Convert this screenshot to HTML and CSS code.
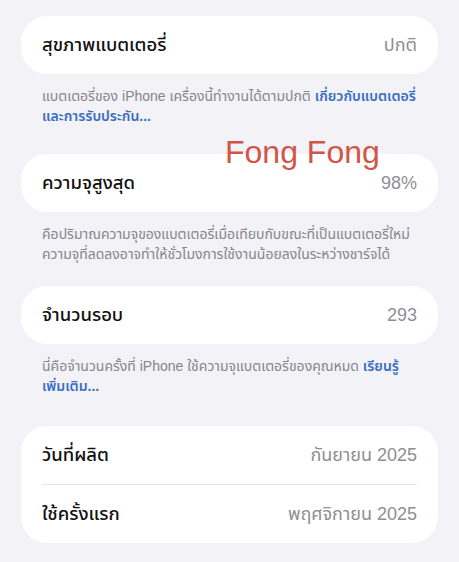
FILE: index.html
```html
<!DOCTYPE html>
<html lang="th">
<head>
<meta charset="utf-8">
<link rel="stylesheet" href="styles.css">
</head>
<body>
<main class="page">
  <section class="group g1">
    <div class="card">
      <div class="row"><span class="label">สุขภาพแบตเตอรี่</span><span class="value">ปกติ</span></div>
    </div>
    <p class="note">แบตเตอรี่ของ iPhone เครื่องนี้ทำงานได้ตามปกติ <span class="link">เกี่ยวกับแบตเตอรี่และการรับประกัน...</span></p>
  </section>
  <section class="group g2">
    <div class="card">
      <div class="row"><span class="label">ความจุสูงสุด</span><span class="value">98%</span></div>
    </div>
    <p class="note">คือปริมาณความจุของแบตเตอรี่เมื่อเทียบกับขณะที่เป็นแบตเตอรี่ใหม่ ความจุที่ลดลงอาจทำให้ชั่วโมงการใช้งานน้อยลงในระหว่างชาร์จได้</p>
  </section>
  <section class="group g3">
    <div class="card">
      <div class="row"><span class="label">จำนวนรอบ</span><span class="value">293</span></div>
    </div>
    <p class="note">นี่คือจำนวนครั้งที่ iPhone ใช้ความจุแบตเตอรี่ของคุณหมด <span class="link">เรียนรู้เพิ่มเติม...</span></p>
  </section>
  <section class="group">
    <div class="card">
      <div class="row"><span class="label">วันที่ผลิต</span><span class="value">กันยายน 2025</span></div>
      <div class="divider"></div>
      <div class="row"><span class="label">ใช้ครั้งแรก</span><span class="value">พฤศจิกายน 2025</span></div>
    </div>
  </section>
  <div class="watermark">Fong Fong</div>
</main>
</body>
</html>
```

FILE: styles.css
```css
html, body {
  margin: 0;
  padding: 0;
  background: #f2f2f7;
}
body {
  font-family: "Liberation Sans", "Noto Sans Thai", "Noto Sans", sans-serif;
  color: #111;
  width: 459px;
  height: 562px;
  overflow: hidden;
}
.page {
  position: relative;
  padding: 16px 21px 0;
  display: flex;
  flex-direction: column;
}
.group {
  display: flex;
  flex-direction: column;
}
.g1 { margin-bottom: 28px; }
.g2 { margin-bottom: 22px; }
.g3 { margin-bottom: 30px; }
.card {
  background: #fff;
  border-radius: 26px;
  padding: 0 21px;
  display: flex;
  flex-direction: column;
}
.row {
  height: 58px;
  display: flex;
  align-items: center;
  justify-content: space-between;
}
.label {
  font-size: 18.5px;
  font-weight: 500;
  color: #111;
}
.value {
  font-size: 18px;
  color: #8e8e93;
}
.divider {
  height: 1px;
  background: #e4e4e8;
}
.note {
  margin: 12px 0 0;
  padding: 0 21px;
  font-size: 14px;
  line-height: 20px;
  color: #86868b;
}
.link {
  color: #3a6ec2;
  font-weight: 600;
}
.watermark {
  position: absolute;
  left: 225px;
  top: 134px;
  font-size: 32px;
  color: #d35446;
  font-family: "Liberation Sans", sans-serif;
}
```
